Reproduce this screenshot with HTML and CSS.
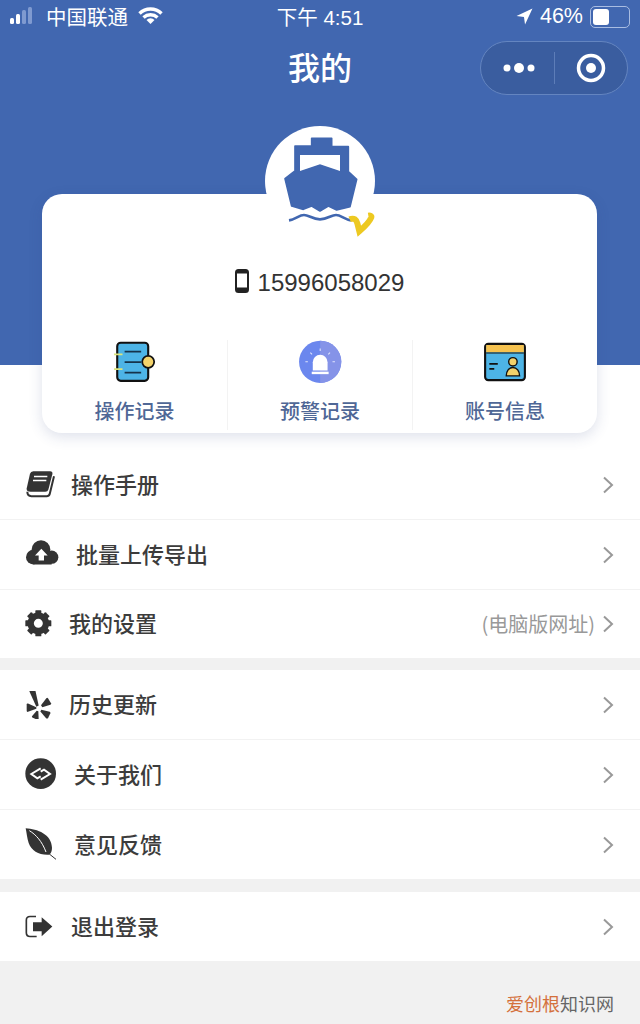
FILE: index.html
```html
<!DOCTYPE html>
<html lang="zh-CN">
<head>
    <meta charset="UTF-8">
    <meta name="viewport" content="width=device-width, initial-scale=1.0">
    <title>我的</title>
    <link rel="stylesheet" href="styles.css">
</head>
<body>
    <div class="top">
        <div class="hero">
            <!-- Status bar -->
            <div class="status">
                <div class="status-left">
                    <svg width="22" height="18" viewBox="0 0 22 18"><rect x="0" y="11" width="4" height="6" rx="1.5" fill="#fff"/><rect x="6" y="7" width="4" height="10" rx="1.5" fill="#fff"/><rect x="12" y="3" width="4" height="14" rx="1.5" fill="#7f9ad0"/><rect x="18" y="0" width="4" height="17" rx="1.5" fill="#7f9ad0"/></svg>
                    <span class="carrier">中国联通</span>
                    <svg width="25" height="18" viewBox="0 0 25 18" fill="none" stroke="#fff" stroke-width="3.5"><path d="M1.5 6.5a16 16 0 0 1 22 0"/><path d="M5.5 10.5a10.500 10.500 0 0 1 14 0"/><path d="M12.500 17l-4-4a5.500 5.500 0 0 1 8 0z" fill="#fff" stroke="none"/></svg>
                </div>
                <div class="status-time">下午 4:51</div>
                <div class="status-right">
                    <svg width="17" height="17" viewBox="0 0 16 16"><path d="M15.500 .5L.5 7.500l7 1 1 7z" fill="#fff"/></svg>
                    <span>46%</span>
                    <span class="battery"><span class="battery-level"></span></span>
                </div>
            </div>
            <!-- Title bar -->
            <div class="nav">
                <h1>我的</h1>
                <div class="capsule">
                    <svg width="34" height="12" viewBox="0 0 34 12" fill="#fff"><circle cx="5" cy="6" r="3.500"/><circle cx="17" cy="6" r="5"/><circle cx="29" cy="6" r="3.500"/></svg>
                    <span class="capsule-line"></span>
                    <svg width="30" height="30" viewBox="0 0 30 30"><circle cx="15" cy="15" r="12.500" fill="none" stroke="#fff" stroke-width="3.500"/><circle cx="15" cy="15" r="5" fill="#fff"/></svg>
                </div>
            </div>
        </div>

        <div class="card">
            <svg class="avatar" width="115" height="115" viewBox="135 48 345 345">
                <circle cx="300" cy="213" r="165" fill="#fff"/>
                <path d="M275 85h60v25h50v75l25 23-20 82-40 10-25-12-25 15-25-15-25 10-35-10-20-82 30-23v-75h50z" fill="#4167b0" stroke="#4167b0" stroke-width="5" stroke-linejoin="round"/>
                <path d="M240 135h120v48l-60-20-60 20z" fill="#fff"/>
                <path d="M207 331c20-3 30-16 45-16 15 0 25 13 48 13 23 0 33-13 48-13 15 0 25 13 45 16" fill="none" stroke="#4167b0" stroke-width="8"/>
                <path d="M389 328c14-6 20 2 23 12l6 24c14-12 31-28 36-42 1-4-3-6-9-5" fill="none" stroke="#edc921" stroke-width="18"/>
            </svg>
            <div class="phone">
                <svg class="phone-icon" width="14" height="24" viewBox="0 0 14 24"><rect x="1" y="1" width="12" height="22" rx="2.500" fill="#fff" stroke="#222" stroke-width="2"/><rect x="1" y="1" width="12" height="3.500" fill="#222"/><rect x="1" y="18.500" width="12" height="4.500" rx="1" fill="#222"/></svg>
                <span>15996058029</span>
            </div>
            <div class="tabs">
                <div class="tab">
                    <svg width="44" height="44" viewBox="205 35 125 125">
                        <rect x="217" y="43" width="88" height="108" rx="10" fill="#4db4e6" stroke="#111" stroke-width="6"/>
                        <path d="M238 68h47M238 98h47M238 128h47" stroke="#16334a" stroke-width="5"/>
                        <path d="M208 76h24M208 118h24" stroke="#dbe57e" stroke-width="5"/>
                        <circle cx="305" cy="97" r="17" fill="#f3d36b" stroke="#111" stroke-width="5"/>
                    </svg>
                    <span>操作记录</span>
                </div>
                <div class="tab">
                    <svg width="44" height="44" viewBox="722 35 125 125">
                        <circle cx="785" cy="97" r="60" fill="#6b87ee"/>
                        <path d="M785 37a60 60 0 0 1 0 120z" fill="#8593e8"/>
                        <path d="M764 122V98a21 21 0 0 1 42 0v24z" fill="#fff"/>
                        <rect x="761" y="125" width="48" height="7" fill="#fff"/>
                        <path d="M785 66v-7M762 76l-5-5M808 76l5-5M750 97h-7M820 97h7" stroke="#dfe4fb" stroke-width="3"/>
                    </svg>
                    <span>预警记录</span>
                </div>
                <div class="tab">
                    <svg width="44" height="44" viewBox="1240 35 125 125">
                        <rect x="1246" y="46" width="113" height="103" rx="9" fill="#4db4e6" stroke="#111" stroke-width="6"/>
                        <path d="M1249 49h107v21h-107z" fill="#f5c24f"/>
                        <path d="M1249 72h107" stroke="#111" stroke-width="3"/>
                        <path d="M1258 103h24M1258 117h14" stroke="#111" stroke-width="5"/>
                        <circle cx="1325" cy="97" r="12" fill="#f3d36b" stroke="#111" stroke-width="4"/>
                        <path d="M1306 137c0-14 8-24 19-24s19 10 19 24z" fill="#f3d36b" stroke="#111" stroke-width="4"/>
                    </svg>
                    <span>账号信息</span>
                </div>
            </div>
        </div>
    </div>

    <div class="group">
        <div class="row">
            <svg width="30" height="30" viewBox="75 58.500 90 90">
                <path d="M100 62h50q9 0 7 9l-12 47q-2 6-9 6H92q-13 0-12-10l10-44q2-8 10-8z" fill="#333"/>
                <path d="M102 78h40M99 90h40" stroke="#fff" stroke-width="4"/>
                <path d="M82 124q0 13 12 13h46q7 0 9-6l13-54" fill="none" stroke="#333" stroke-width="6"/>
            </svg>
            <span class="label">操作手册</span>
            <svg class="arrow" width="12" height="18" viewBox="0 0 12 18"><path d="M2 1.500L10 9l-8 7.500" fill="none" stroke="#999" stroke-width="2"/></svg>
        </div>
        <div class="row">
            <svg width="35" height="35" viewBox="75 262.500 105 105">
                <circle cx="100" cy="323" r="22" fill="#333"/><circle cx="123" cy="300" r="28" fill="#333"/><circle cx="155" cy="323" r="20" fill="#333"/>
                <rect x="100" y="320" width="55" height="25" fill="#333"/>
                <path d="M124 298l19 20h-11v15h-16v-15h-11z" fill="#fff"/>
            </svg>
            <span class="label">批量上传导出</span>
            <svg class="arrow" width="12" height="18" viewBox="0 0 12 18"><path d="M2 1.500L10 9l-8 7.500" fill="none" stroke="#999" stroke-width="2"/></svg>
        </div>
        <div class="row row-short">
            <svg width="28" height="28" viewBox="75 480 84 84">
                <circle cx="115" cy="520" r="23" fill="none" stroke="#333" stroke-width="19"/>
                <g fill="#333">
                    <rect x="106" y="481" width="18" height="14" rx="2"/>
                    <rect x="106" y="481" width="18" height="14" rx="2" transform="rotate(45 115 520)"/>
                    <rect x="106" y="481" width="18" height="14" rx="2" transform="rotate(90 115 520)"/>
                    <rect x="106" y="481" width="18" height="14" rx="2" transform="rotate(135 115 520)"/>
                    <rect x="106" y="481" width="18" height="14" rx="2" transform="rotate(180 115 520)"/>
                    <rect x="106" y="481" width="18" height="14" rx="2" transform="rotate(225 115 520)"/>
                    <rect x="106" y="481" width="18" height="14" rx="2" transform="rotate(270 115 520)"/>
                    <rect x="106" y="481" width="18" height="14" rx="2" transform="rotate(315 115 520)"/>
                </g>
            </svg>
            <span class="label">我的设置</span>
            <span class="hint">(电脑版网址)</span>
            <svg class="arrow" width="12" height="18" viewBox="0 0 12 18"><path d="M2 1.500L10 9l-8 7.500" fill="none" stroke="#999" stroke-width="2"/></svg>
        </div>
    </div>

    <div class="group">
        <div class="row">
            <svg width="28" height="28" viewBox="75 61.500 84 84" fill="#333">
                <path d="M88 62l17-7 11 50-7 4z"/>
                <path d="M80 102q0-4 4-3l25 11v5l-25 9q-4 1-4-3z"/>
                <path d="M123 104l16-21q3-2 5 0l9 15q1 4-2 5l-24 7z"/>
                <path d="M124 118l25 6q3 1 2 4l-7 15q-2 2-5 1l-18-21z"/>
                <path d="M110 121l5 1 1 24q-1 3-4 2l-15-7q-2-2-1-4z"/>
            </svg>
            <span class="label">历史更新</span>
            <svg class="arrow" width="12" height="18" viewBox="0 0 12 18"><path d="M2 1.500L10 9l-8 7.500" fill="none" stroke="#999" stroke-width="2"/></svg>
        </div>
        <div class="row">
            <svg width="33" height="33" viewBox="75 264 99 99">
                <circle cx="122" cy="311" r="46" fill="#333"/>
                <path d="M122 295l-28 17 18 13 10-6M122 329l28-17-18-13-10 6" fill="none" stroke="#fff" stroke-width="6"/>
            </svg>
            <span class="label">关于我们</span>
            <svg class="arrow" width="12" height="18" viewBox="0 0 12 18"><path d="M2 1.500L10 9l-8 7.500" fill="none" stroke="#999" stroke-width="2"/></svg>
        </div>
        <div class="row">
            <svg width="33" height="33" viewBox="75 474 99 99">
                <path d="M77 475c35 2 78 18 79 58 0 10-3 16-8 21-30 2-53-10-62-35-5-14-6-30-9-44z" fill="#333"/>
                <path d="M88 482c20 12 38 32 50 64" fill="none" stroke="#fff" stroke-width="3"/>
                <path d="M148 552l20 16" stroke="#333" stroke-width="3"/>
            </svg>
            <span class="label">意见反馈</span>
            <svg class="arrow" width="12" height="18" viewBox="0 0 12 18"><path d="M2 1.500L10 9l-8 7.500" fill="none" stroke="#999" stroke-width="2"/></svg>
        </div>
    </div>

    <div class="group group-last">
        <div class="row">
            <svg width="30" height="30" viewBox="75 724.500 90 90">
                <path d="M108 738H90q-11 0-11 11v38q0 11 11 11h20" fill="none" stroke="#333" stroke-width="5"/>
                <path d="M99 755h26v-15l32 28-32 29v-15H99z" fill="#333"/>
            </svg>
            <span class="label">退出登录</span>
            <svg class="arrow" width="12" height="18" viewBox="0 0 12 18"><path d="M2 1.500L10 9l-8 7.500" fill="none" stroke="#999" stroke-width="2"/></svg>
        </div>
    </div>

    <div class="watermark"><span class="watermark-name">爱创根</span>知识网</div>
</body>
</html>
```

FILE: styles.css
```css
body {
    margin: 0;
    height: 1024px;
    position: relative;
    overflow: hidden;
    background-color: #f1f1f1;
    font-family: "Liberation Sans", "Noto Sans CJK SC", sans-serif;
}

/* Blue header */
.top {
    background-color: #fff;
    padding-bottom: 17px;
}

.hero {
    height: 365px;
    background-color: #4167b0;
    color: #fff;
}

.status {
    height: 33px;
    padding: 0 10px;
    display: grid;
    grid-template-columns: 1fr auto 1fr;
    align-items: center;
    font-size: 20.5px;
}

.status-left, .status-right {
    display: flex;
    align-items: center;
}

.status-left {
    gap: 14px;
    margin-bottom: 2px;
}

.status-time {
    margin-bottom: 2px;
}

.carrier {
    margin-right: -4px;
}

.status-right {
    justify-content: flex-end;
    gap: 7px;
    font-size: 21.5px;
}

.battery {
    width: 34px;
    height: 16px;
    padding: 2px;
    border: 1px solid #a9bde2;
    border-radius: 5px;
}

.battery-level {
    display: block;
    width: 16px;
    height: 16px;
    background-color: #fff;
    border-radius: 3px;
}

.nav {
    height: 70px;
    position: relative;
    display: flex;
    align-items: center;
    justify-content: center;
}

.nav h1 {
    margin: 0 0 4px;
    font-size: 32px;
    font-weight: 500;
    font-family: "Noto Sans CJK SC", sans-serif;
}

.capsule {
    position: absolute;
    top: 8px;
    right: 12px;
    box-sizing: border-box;
    width: 148px;
    height: 54px;
    padding-left: 21px;
    display: flex;
    align-items: center;
    background-color: #3a5d9f;
    border: 1px solid #6485c0;
    border-radius: 27px;
}

.capsule-line {
    width: 1px;
    height: 32px;
    margin: 0 21px 0 18px;
    background-color: #5d7db8;
}

/* Card over the header */
.card {
    position: relative;
    margin: -171px 43px 0 42px;
    padding-top: 72px;
    height: 167px;
    background-color: #fff;
    border-radius: 20px;
    box-shadow: 0 4px 14px rgba(50, 70, 130, 0.16);
}

.avatar {
    position: absolute;
    top: -68px;
    left: 223px;
}

.phone {
    height: 34px;
    display: flex;
    align-items: center;
    justify-content: center;
    gap: 9px;
    font-size: 24px;
    color: #333;
}

.phone-icon {
    margin-bottom: 4px;
}

.tabs {
    margin-top: 34px;
    display: grid;
    grid-template-columns: repeat(3, 1fr);
}

.tab {
    height: 90px;
    margin-top: 6px;
    display: flex;
    flex-direction: column;
    align-items: center;
    gap: 12px;
    color: #4f6796;
    font-size: 20px;
    font-weight: 500;
    font-family: "Noto Sans CJK SC", sans-serif;
    border-left: 1px solid #f3f3f3;
}

.tab:first-child {
    border-left: none;
}

/* Menu lists */
.group {
    background-color: #fff;
    margin-bottom: 12px;
}

.group:nth-child(3) {
    margin-bottom: 13px;
}

.row {
    height: 70px;
    box-sizing: border-box;
    padding: 0 26px 0 25px;
    display: flex;
    align-items: center;
    gap: 16px;
    border-bottom: 1px solid #f2f2f2;
}

.row:last-child {
    height: 69px;
    border-bottom: none;
}

.row-short:last-child {
    height: 68px;
}

.label {
    flex: 1;
    padding-bottom: 4px;
    font-size: 22px;
    font-weight: 500;
    color: #3c3c3c;
    font-family: "Noto Sans CJK SC", sans-serif;
}

.hint {
    margin-right: -9px;
    padding-bottom: 2px;
    font-size: 20px;
    color: #999;
    font-family: "Noto Sans CJK SC", sans-serif;
}

.watermark {
    position: absolute;
    right: 26px;
    bottom: 8px;
    font-size: 18px;
    color: #666;
    font-family: "Noto Sans CJK SC", sans-serif;
}

.watermark-name {
    color: #d4703c;
}
```
